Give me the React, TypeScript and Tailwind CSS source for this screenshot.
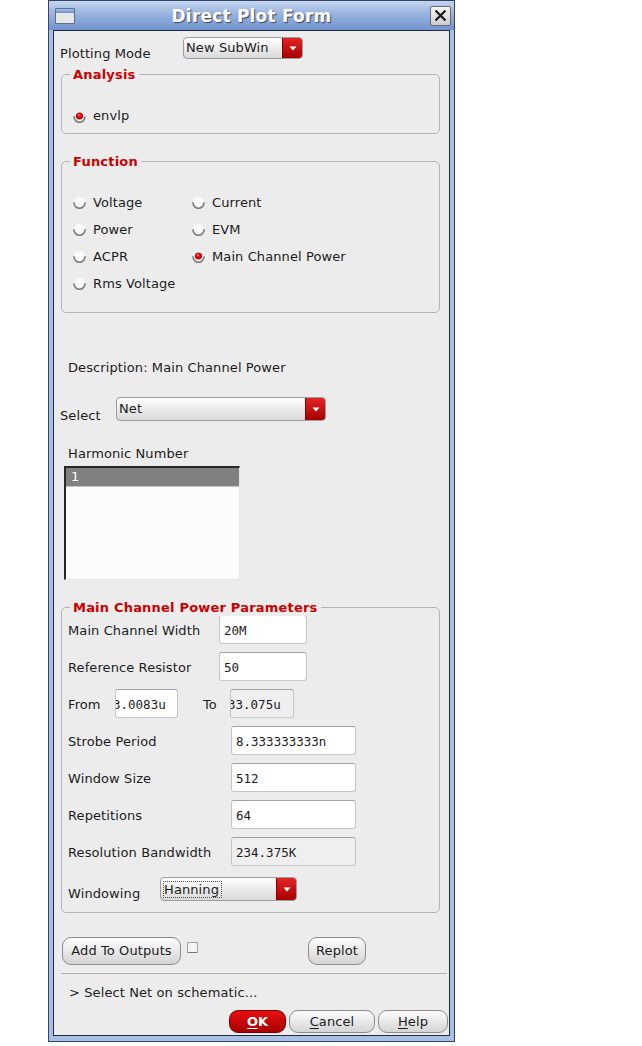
import React from "react";

const ui = "font-['DejaVu_Sans',sans-serif] text-[13px] leading-[16px] tracking-[0.1px] text-[#1c1c1c]";
const mono = "font-['DejaVu_Sans_Mono',monospace] text-[12.5px] leading-[16px] text-[#1c1c1c]";

const Radio = ({ checked = false }: { checked?: boolean }) => (
  <svg width="13" height="13" viewBox="0 0 13 13" className="shrink-0">
    <circle cx="6.5" cy="6.5" r="5.8" fill="#f9f9f9" />
    <path d="M1 6.8 A5.5 5.5 0 0 0 12 6.8" fill="none" stroke="#7e7e7e" strokeWidth="1.6" strokeLinecap="round" />
    {checked && (
      <>
        <circle cx="6.5" cy="6" r="3.6" fill="#b40000" />
        <circle cx="6.5" cy="5.8" r="2.6" fill="#e41212" />
        <circle cx="5.7" cy="4.9" r="0.9" fill="#ff9090" />
      </>
    )}
  </svg>
);

const Combo = ({ text, className, focus = false }: { text: string; className: string; focus?: boolean }) => (
  <div className={`flex shrink-0 overflow-hidden rounded-[4px] border border-[#9c9c9c] bg-gradient-to-b from-[#ffffff] to-[#d9d9d9] ${className}`}>
    <div className={`flex flex-1 items-center pl-[2px] ${ui}`}>
      {focus ? <span className="border border-dotted border-[#555] pr-[2px] leading-[15px]">{text}</span> : text}
    </div>
    <div className="flex w-[20px] items-center justify-center border-l border-[#8a0000] bg-gradient-to-b from-[#e42222] to-[#a60000]">
      <svg width="8" height="5" viewBox="0 0 8 5">
        <path d="M0.5 0.5 H7.5 L4 4.5 Z" fill="#ffffff" />
      </svg>
    </div>
  </div>
);

const Field = ({ value, className, gray = false, clip = false }: { value: string; className: string; gray?: boolean; clip?: boolean }) => (
  <div
    className={`flex h-full shrink-0 items-center overflow-hidden rounded-[3px] border border-[#c6c6c6] border-t-[#a2a2a2] ${
      gray ? "bg-[#efefef]" : "bg-white"
    } ${clip ? "pl-0" : "pl-[4px]"} ${mono} ${className}`}
  >
    <span className={`mt-[2px] whitespace-nowrap ${clip ? "ml-[-3px]" : ""}`}>{value}</span>
  </div>
);

const GroupBox = ({ title, className, children }: { title: string; className: string; children?: React.ReactNode }) => (
  <div className={`relative ml-[7px] w-[379px] shrink-0 rounded-[5px] border border-[#b4b4b4] ${className}`}>
    <span className="absolute left-[8px] top-[-8px] bg-[#ececec] px-[3px] font-['DejaVu_Sans',sans-serif] text-[13px] font-bold leading-[16px] tracking-[0.2px] text-[#cc0000]">
      {title}
    </span>
    {children}
  </div>
);

const Row = ({ label, lw, children }: { label: string; lw: string; children: React.ReactNode }) => (
  <div className="flex h-[29px] items-center pl-[6px]">
    <span className={`mt-[2px] shrink-0 ${ui} ${lw}`}>{label}</span>
    {children}
  </div>
);

const Pill = ({ children, className }: { children: React.ReactNode; className: string }) => (
  <div
    className={`flex h-full shrink-0 items-center justify-center rounded-[9px] border border-[#8c8c8c] bg-gradient-to-b from-[#fdfdfd] to-[#d4d4d4] ${ui} ${className}`}
  >
    {children}
  </div>
);

const functions: [string, boolean][] = [
  ["Voltage", false],
  ["Current", false],
  ["Power", false],
  ["EVM", false],
  ["ACPR", false],
  ["Main Channel Power", true],
  ["Rms Voltage", false],
];

export default function App() {
  return (
    <div className="h-[1046px] w-[642px] bg-white">
      <div className="ml-[48px] flex h-[1042px] w-[407px] flex-col border border-[#34435f] bg-[#a9c0e6]">
        {/* title bar */}
        <div className="flex h-[29px] shrink-0 items-center bg-gradient-to-b from-[#c4d5f0] via-[#94b0dc] to-[#7194ce]">
          <div className="w-[30px] pl-[6px]">
            <div className="flex h-[16px] w-[20px] flex-col overflow-hidden rounded-[1px] border border-[#5b6d8e]">
              <div className="h-[4px] bg-gradient-to-b from-[#a9c2ea] to-[#6f8fc8]" />
              <div className="flex-1 bg-[#e6e6e6]" />
            </div>
          </div>
          <div className="flex-1 pt-[1px] text-center font-['DejaVu_Sans',sans-serif] text-[17px] font-bold leading-[20px] tracking-[0.2px] text-white [text-shadow:1px_1px_1px_#3a4660]">
            Direct Plot Form
          </div>
          <div className="flex w-[30px] justify-end pr-[3px]">
            <div className="flex h-[20px] w-[21px] items-center justify-center rounded-[2px] border border-[#6a6a6a] bg-gradient-to-b from-[#f6f6f6] to-[#cdcdcd]">
              <svg width="13" height="13" viewBox="0 0 13 13">
                <path d="M1.5 1.5 L11.5 11.5 M11.5 1.5 L1.5 11.5" stroke="#1a1a1a" strokeWidth="2.2" />
              </svg>
            </div>
          </div>
        </div>

        {/* content */}
        <div className="mx-[4px] flex h-[1006px] shrink-0 flex-col overflow-hidden border border-[#1f2a3f] bg-[#ececec]">
          <div className="flex h-[43px] shrink-0 pt-[6px]">
            <span className={`ml-[6px] mt-[9px] w-[123px] shrink-0 ${ui}`}>Plotting Mode</span>
            <Combo text="New SubWin" className="h-[22px] w-[120px]" />
          </div>

          <GroupBox title="Analysis" className="h-[60px]">
            <div className="ml-[11px] mt-[33px] flex h-[16px] items-center gap-[7px]">
              <Radio checked />
              <span className={ui}>envlp</span>
            </div>
          </GroupBox>

          <GroupBox title="Function" className="mt-[27px] h-[152px]">
            <div className="grid auto-rows-[27px] grid-cols-[119px_1fr] pl-[11px] pt-[27px]">
              {functions.map(([name, on]) => (
                <div key={name} className="flex items-center gap-[7px]">
                  <Radio checked={on} />
                  <span className={ui}>{name}</span>
                </div>
              ))}
            </div>
          </GroupBox>

          <span className={`ml-[14px] mt-[47px] shrink-0 ${ui}`}>Description: Main Channel Power</span>

          <div className="flex h-[47px] shrink-0 items-start">
            <span className={`ml-[6px] mt-[32px] w-[56px] shrink-0 ${ui}`}>Select</span>
            <div className="mt-[21px]">
              <Combo text="Net" className="h-[24px] w-[210px]" />
            </div>
          </div>

          <span className={`ml-[14px] mt-[23px] shrink-0 ${ui}`}>Harmonic Number</span>

          <div className="ml-[10px] mt-[4px] h-[114px] w-[176px] shrink-0 border-b border-l-2 border-r border-t-2 border-b-[#e6e6e6] border-l-[#262626] border-r-[#e6e6e6] border-t-[#262626] bg-[#fcfcfc]">
            <div className="flex h-[19px] items-center border-b border-[#c4c4c4] bg-[#808080] pl-[5px] font-['DejaVu_Sans',sans-serif] text-[13px] leading-[16px] text-white">
              1
            </div>
          </div>

          <GroupBox title="Main Channel Power Parameters" className="mt-[27px] h-[306px]">
            <div className="flex flex-col gap-[8px] pt-[7px]">
              <Row label="Main Channel Width" lw="w-[151px]">
                <Field value="20M" className="w-[88px]" />
              </Row>
              <Row label="Reference Resistor" lw="w-[151px]">
                <Field value="50" className="w-[88px]" />
              </Row>
              <Row label="From" lw="w-[47px]">
                <Field value="3.0083u" className="w-[63px]" clip />
                <span className={`ml-[25px] mt-[2px] w-[27px] shrink-0 ${ui}`}>To</span>
                <Field value="33.075u" className="w-[64px]" gray clip />
              </Row>
              <Row label="Strobe Period" lw="w-[163px]">
                <Field value="8.333333333n" className="w-[125px]" />
              </Row>
              <Row label="Window Size" lw="w-[163px]">
                <Field value="512" className="w-[125px]" />
              </Row>
              <Row label="Repetitions" lw="w-[163px]">
                <Field value="64" className="w-[125px]" />
              </Row>
              <Row label="Resolution Bandwidth" lw="w-[163px]">
                <Field value="234.375K" className="w-[125px]" gray />
              </Row>
            </div>
            <div className="mt-[11px] flex h-[24px] items-start pl-[6px]">
              <span className={`mt-[9px] w-[92px] shrink-0 ${ui}`}>Windowing</span>
              <Combo text="Hanning" className="h-[24px] w-[137px]" focus />
            </div>
          </GroupBox>

          <div className="mt-[24px] flex h-[28px] shrink-0">
            <Pill className="ml-[8px] w-[119px]">Add To Outputs</Pill>
            <div className="ml-[6px] mt-[5px] h-[11px] w-[11px] shrink-0 rounded-[1px] border border-[#a4a4a4] border-b-[#7a7a7a] bg-[#f4f4f4]" />
            <Pill className="ml-[110px] w-[58px]">Replot</Pill>
          </div>

          <div className="ml-[7px] mt-[8px] h-[1px] w-[386px] shrink-0 bg-[#b2b2b2]" />

          <span className={`ml-[15px] mt-[11px] shrink-0 ${ui}`}>&gt; Select Net on schematic...</span>

          <div className="mt-[9px] flex h-[23px] shrink-0 justify-end gap-[3px] pr-[1px]">
            <div className="flex h-full w-[57px] items-center justify-center rounded-[9px] border border-[#7a0000] bg-gradient-to-b from-[#e81010] to-[#a80000] font-['DejaVu_Sans',sans-serif] text-[13px] font-bold leading-[16px] text-white">
              <span className="underline underline-offset-2">O</span>K
            </div>
            <Pill className="w-[86px]">
              <span className="underline underline-offset-2">C</span>ancel
            </Pill>
            <Pill className="w-[70px]">
              <span className="underline underline-offset-2">H</span>elp
            </Pill>
          </div>
        </div>
      </div>
    </div>
  );
}
